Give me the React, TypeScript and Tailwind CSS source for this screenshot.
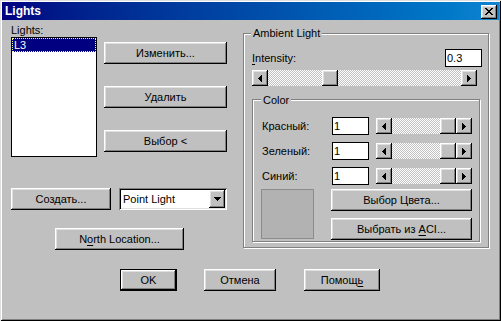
import React from 'react';

const raised =
  'bg-[#c0c0c0] shadow-[inset_-1px_-1px_0_#000,inset_1px_1px_0_#fff,inset_-2px_-2px_0_#808080,inset_2px_2px_0_#dfdfdf]';
const sunken =
  'shadow-[inset_1px_1px_0_#808080,inset_-1px_-1px_0_#fff,inset_2px_2px_0_#000,inset_-2px_-2px_0_#dfdfdf]';
const etched = 'border border-[#808080] shadow-[inset_1px_1px_0_#fff,1px_1px_0_#fff]';
const track =
  'bg-[repeating-conic-gradient(#c0c0c0_0_25%,#ffffff_0_50%)] bg-size-[2px_2px]';

const Btn = ({ className, children }: { className: string; children: React.ReactNode }) => (
  <div className={`h-[22px] flex items-center justify-center ${raised} ${className}`}>{children}</div>
);

const Arrow = ({ dir }: { dir: 'left' | 'right' | 'down' }) => {
  if (dir === 'down') {
    return (
      <svg width="7" height="4" viewBox="0 0 7 4" shapeRendering="crispEdges">
        <path d="M0 0h7v1h-7zM1 1h5v1h-5zM2 2h3v1h-3zM3 3h1v1h-1z" fill="#000" />
      </svg>
    );
  }
  const d =
    dir === 'left'
      ? 'M3 0h1v7h-1zM2 1h1v5h-1zM1 2h1v3h-1zM0 3h1v1h-1z'
      : 'M0 0h1v7h-1zM1 1h1v5h-1zM2 2h1v3h-1zM3 3h1v1h-1z';
  return (
    <svg width="4" height="7" viewBox="0 0 4 7" shapeRendering="crispEdges">
      <path d={d} fill="#000" />
    </svg>
  );
};

const ScrollBar = ({ className, thumb }: { className: string; thumb: string }) => (
  <div className={`flex h-[16px] ${className}`}>
    <div className={`w-[16px] h-full flex items-center justify-center ${raised}`}>
      <Arrow dir="left" />
    </div>
    <div className={`flex-1 flex ${track}`}>
      <div className={`w-[16px] h-full ${raised} ${thumb}`} />
    </div>
    <div className={`w-[16px] h-full flex items-center justify-center ${raised}`}>
      <Arrow dir="right" />
    </div>
  </div>
);

const Field = ({ value }: { value: string }) => (
  <div className="w-[37px] h-[18px] border border-black bg-white pl-[1px] flex items-center">{value}</div>
);

const ColorRow = ({ label }: { label: string }) => (
  <div className="flex items-center pl-[9px]">
    <span className="w-[70px]">{label}</span>
    <Field value="1" />
    <ScrollBar className="w-[96px] ml-[7px]" thumb="ml-auto" />
  </div>
);

export default function App() {
  return (
    <div className="w-[501px] h-[321px] bg-[#c0c0c0] p-[2px] font-['Liberation_Sans',Arial,sans-serif] text-[11px] leading-[13px] text-black select-none shadow-[inset_1px_1px_0_#dfdfdf,inset_-1px_-1px_0_#000,inset_2px_2px_0_#fff,inset_-2px_-2px_0_#808080]">
      {/* title bar */}
      <div className="h-[18px] flex items-center justify-between pl-[3px] pr-[2px] bg-linear-to-r from-[#000080] to-[#1084d0]">
        <span className="text-white font-bold text-[12px]">Lights</span>
        <div className={`w-[16px] h-[14px] mt-[1px] flex items-center justify-center ${raised}`}>
          <svg width="8" height="7" viewBox="0 0 8 7" shapeRendering="crispEdges">
            <path
              d="M0 0h2v1h-2zM6 0h2v1h-2zM1 1h2v1h-2zM5 1h2v1h-2zM2 2h4v1h-4zM3 3h2v1h-2zM2 4h4v1h-4zM1 5h2v1h-2zM5 5h2v1h-2zM0 6h2v1h-2zM6 6h2v1h-2z"
              fill="#000"
            />
          </svg>
        </div>
      </div>

      <div className="flex pt-[4px] pl-[9px]">
        {/* left column */}
        <div className="w-[216px] flex flex-col">
          <div>Lights:</div>
          <div className="flex">
            <div className="w-[86px] h-[120px] border border-black bg-white">
              <div className="h-[14px] bg-[#000080] text-white border border-dotted border-[#ffff80] pl-[1px] leading-[12px]">
                L3
              </div>
            </div>
            <div className="flex flex-col ml-[7px] pt-[5px] gap-[22px]">
              <Btn className="w-[123px]">Изменить...</Btn>
              <Btn className="w-[123px]">Удалить</Btn>
              <Btn className="w-[123px]">Выбор &lt;</Btn>
            </div>
          </div>
          <div className="flex mt-[31px] gap-[8px]">
            <Btn className="w-[100px]">Создать...</Btn>
            <div className={`w-[108px] h-[22px] bg-white flex p-[2px] ${sunken}`}>
              <span className="flex-1 pl-[2px] flex items-center">Point Light</span>
              <div className={`w-[16px] flex items-center justify-center ${raised}`}>
                <Arrow dir="down" />
              </div>
            </div>
          </div>
          <div className="mt-[18px] ml-[44px]">
            <Btn className="w-[129px]">
              <span>
                N<span className="underline underline-offset-[2px]">o</span>rth Location...
              </span>
            </Btn>
          </div>
        </div>

        {/* ambient light group */}
        <div className={`relative ml-[16px] mt-[9px] w-[246px] h-[215px] ${etched}`}>
          <span className="absolute left-[7px] -top-[7px] px-[2px] bg-[#c0c0c0]">Ambient Light</span>
          <div className="flex items-center justify-between pl-[8px] pr-[6px] mt-[15px]">
            <span>
              <span className="underline underline-offset-[2px]">I</span>ntensity:
            </span>
            <Field value="0.3" />
          </div>
          <ScrollBar className="w-[225px] ml-[8px] mt-[3px]" thumb="ml-[54px]" />

          {/* color group */}
          <div className={`relative ml-[8px] mt-[13px] w-[228px] h-[143px] ${etched}`}>
            <span className="absolute left-[8px] -top-[6px] px-[2px] bg-[#c0c0c0]">Color</span>
            <div className="flex flex-col gap-[7px] mt-[17px]">
              <ColorRow label="Красный:" />
              <ColorRow label="Зеленый:" />
              <ColorRow label="Синий:" />
            </div>
            <div className="flex mt-[4px] pl-[8px]">
              <div className="w-[53px] h-[50px] bg-[#b2b2b2] border border-[#8c8c8c]" />
              <div className="flex flex-col gap-[7px] ml-[17px]">
                <Btn className="w-[141px]">Выбор Цвета...</Btn>
                <Btn className="w-[141px]">
                  <span>
                    Выбрать из <span className="underline underline-offset-[2px]">A</span>CI...
                  </span>
                </Btn>
              </div>
            </div>
          </div>
        </div>
      </div>

      {/* dialog buttons */}
      <div className="flex mt-[19px] pl-[118px]">
        <div className="w-[57px] h-[22px] border border-black">
          <Btn className="w-full h-full">OK</Btn>
        </div>
        <Btn className="w-[72px] ml-[27px]">Отмена</Btn>
        <Btn className="w-[76px] ml-[28px]">
          <span>
            Помощ<span className="underline underline-offset-[2px]">ь</span>
          </span>
        </Btn>
      </div>
    </div>
  );
}
